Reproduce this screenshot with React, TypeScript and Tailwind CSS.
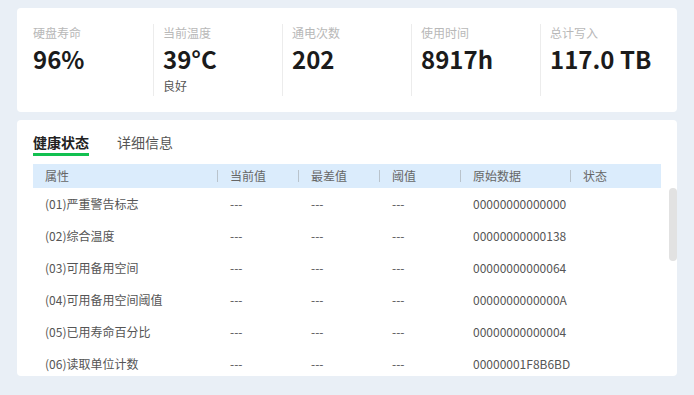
const font = { fontFamily: '"Noto Sans CJK SC", "Noto Sans", sans-serif' };

const stats = [
  { label: "硬盘寿命", value: "96%" },
  { label: "当前温度", value: "39°C", note: "良好" },
  { label: "通电次数", value: "202" },
  { label: "使用时间", value: "8917h" },
  { label: "总计写入", value: "117.0 TB" },
];

const columns = [
  { title: "属性", w: "w-[184px]" },
  { title: "当前值", w: "w-[81px]" },
  { title: "最差值", w: "w-[81px]" },
  { title: "阈值", w: "w-[81px]" },
  { title: "原始数据", w: "w-[110px]" },
  { title: "状态", w: "flex-1" },
];

const rows = [
  ["(01)严重警告标志", "00000000000000"],
  ["(02)综合温度", "00000000000138"],
  ["(03)可用备用空间", "00000000000064"],
  ["(04)可用备用空间阈值", "0000000000000A"],
  ["(05)已用寿命百分比", "00000000000004"],
  ["(06)读取单位计数", "00000001F8B6BD"],
];

export default function App() {
  return (
    <div className="h-[395px] w-[694px] overflow-hidden bg-[#e9eff6] px-[17px] pt-[8px]" style={font}>
      {/* summary */}
      <div className="flex h-[104px] items-start rounded-[4px] bg-white px-[7px] pt-[16px]">
        {stats.map((s, i) => (
          <div
            key={s.label}
            className={`flex h-[72px] w-[129px] flex-col pl-[9px] ${i > 0 ? "border-l border-[#ececec]" : ""}`}
          >
            <div className="mt-[1px] text-[12px] leading-[16px] text-[#b8b8b8]">{s.label}</div>
            <div className="mt-[3px] text-[24px] font-bold leading-[30px] text-[#1b1b1b]">{s.value}</div>
            {s.note && <div className="mt-[4px] text-[12px] leading-[16px] text-[#555]">{s.note}</div>}
          </div>
        ))}
      </div>

      {/* health table */}
      <div className="relative mt-[8px] h-[256px] overflow-hidden rounded-[4px] bg-white px-[16px]">
        <div className="flex h-[44px] items-start gap-[28px] pt-[12px] text-[14px]">
          <div className="flex flex-col">
            <span className="font-bold leading-[20px] text-[#222]">健康状态</span>
            <span className="mt-[1px] h-[3px] bg-[#12c050]" />
          </div>
          <span className="leading-[20px] text-[#555]">详细信息</span>
        </div>

        <div className="flex h-[24px] items-center bg-[#dbecfc] text-[12px] text-[#666]">
          {columns.map((c, i) => (
            <div key={c.title} className={`flex h-full items-center ${c.w}`}>
              {i > 0 && <span className="h-[12px] w-px bg-[#b9c3cc]" />}
              <span className="pl-[12px]">{c.title}</span>
            </div>
          ))}
        </div>

        {rows.map(([name, raw]) => (
          <div key={name} className="flex h-[32px] items-center text-[12px] text-[#555]">
            <div className="w-[184px] pl-[12px]">{name}</div>
            <div className="w-[81px] pl-[13px]">---</div>
            <div className="w-[81px] pl-[13px]">---</div>
            <div className="w-[81px] pl-[13px]">---</div>
            <div className="w-[110px] pl-[13px]">{raw}</div>
            <div className="flex-1" />
          </div>
        ))}

        {/* scrollbar thumb */}
        <div className="absolute right-0 top-[68px] h-[73px] w-[8px] rounded-[4px] bg-[#e2e2e2]" />
      </div>
    </div>
  );
}
